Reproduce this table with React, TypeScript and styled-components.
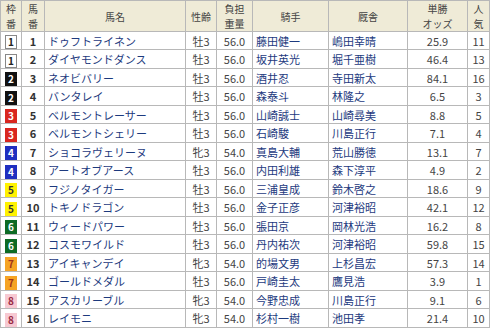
import React from "react";
import styled, { createGlobalStyle } from "styled-components";

const GlobalStyle = createGlobalStyle`
  body {
    margin: 0;
    background: #fff;
    font-family: "Noto Sans CJK JP", "Noto Sans", sans-serif;
  }
`;

const Table = styled.table`
  width: 489px;
  table-layout: fixed;
  border-collapse: collapse;
  border: 1px solid #b8b8b8;
  font-size: 11px;
  color: #444;
`;

const HeadCell = styled.th`
  height: 30px;
  padding: 0;
  background: #efebd7;
  border: 1px solid #b8b8b8;
  font-weight: normal;
  font-size: 10px;
  line-height: 15px;
  color: #444;
  text-align: center;
`;

const Row = styled.tr<{ $tall: boolean }>`
  height: ${({ $tall }) => ($tall ? 19 : 18)}px;
`;

const Cell = styled.td<{ $align?: "left" | "center"; $link?: boolean }>`
  padding: 0 ${({ $align }) => ($align === "left" ? "3px" : "0")};
  border: 1px solid #b8b8b8;
  text-align: ${({ $align }) => $align ?? "center"};
  color: ${({ $link }) => ($link ? "#1d3a7e" : "#444")};
  white-space: nowrap;
  overflow: hidden;
  line-height: 16px;
`;

const frameColors: Record<number, { bg: string; fg: string; border: string }> = {
  1: { bg: "#ffffff", fg: "#222", border: "#888" },
  2: { bg: "#111111", fg: "#fff", border: "#111" },
  3: { bg: "#d9261f", fg: "#fff", border: "#d9261f" },
  4: { bg: "#1f2fc0", fg: "#fff", border: "#1f2fc0" },
  5: { bg: "#fff200", fg: "#333", border: "#fff200" },
  6: { bg: "#0d6b24", fg: "#fff", border: "#0d6b24" },
  7: { bg: "#f6a425", fg: "#a0321c", border: "#f6a425" },
  8: { bg: "#f7c9d2", fg: "#9a2a45", border: "#f7c9d2" },
};

const Frame = styled.span<{ $n: number }>`
  display: inline-block;
  box-sizing: border-box;
  width: 12px;
  height: 14px;
  line-height: 12px;
  font-size: 10px;
  font-weight: bold;
  text-align: center;
  vertical-align: middle;
  background: ${({ $n }) => frameColors[$n].bg};
  color: ${({ $n }) => frameColors[$n].fg};
  border: 1px solid ${({ $n }) => frameColors[$n].border};
`;

const Number = styled.span`
  font-weight: bold;
  color: #333;
`;

type Horse = {
  frame: number;
  no: number;
  name: string;
  sex: string;
  weight: string;
  jockey: string;
  trainer: string;
  odds: string;
  pop: number;
};

const horses: Horse[] = [
  { frame: 1, no: 1, name: "ドゥフトライネン", sex: "牡3", weight: "56.0", jockey: "藤田健一", trainer: "嶋田幸晴", odds: "25.9", pop: 11 },
  { frame: 1, no: 2, name: "ダイヤモンドダンス", sex: "牡3", weight: "56.0", jockey: "坂井英光", trainer: "堀千亜樹", odds: "46.4", pop: 13 },
  { frame: 2, no: 3, name: "ネオビバリー", sex: "牡3", weight: "56.0", jockey: "酒井忍", trainer: "寺田新太", odds: "84.1", pop: 16 },
  { frame: 2, no: 4, name: "バンタレイ", sex: "牡3", weight: "56.0", jockey: "森泰斗", trainer: "林隆之", odds: "6.5", pop: 3 },
  { frame: 3, no: 5, name: "ベルモントレーサー", sex: "牡3", weight: "56.0", jockey: "山崎誠士", trainer: "山崎尋美", odds: "8.8", pop: 5 },
  { frame: 3, no: 6, name: "ベルモントシェリー", sex: "牡3", weight: "56.0", jockey: "石崎駿", trainer: "川島正行", odds: "7.1", pop: 4 },
  { frame: 4, no: 7, name: "ショコラヴェリーヌ", sex: "牝3", weight: "54.0", jockey: "真島大輔", trainer: "荒山勝徳", odds: "13.1", pop: 7 },
  { frame: 4, no: 8, name: "アートオブアース", sex: "牡3", weight: "56.0", jockey: "内田利雄", trainer: "森下淳平", odds: "4.9", pop: 2 },
  { frame: 5, no: 9, name: "フジノタイガー", sex: "牡3", weight: "56.0", jockey: "三浦皇成", trainer: "鈴木啓之", odds: "18.6", pop: 9 },
  { frame: 5, no: 10, name: "トキノドラゴン", sex: "牡3", weight: "56.0", jockey: "金子正彦", trainer: "河津裕昭", odds: "42.1", pop: 12 },
  { frame: 6, no: 11, name: "ウィードパワー", sex: "牡3", weight: "56.0", jockey: "張田京", trainer: "岡林光浩", odds: "16.2", pop: 8 },
  { frame: 6, no: 12, name: "コスモワイルド", sex: "牡3", weight: "56.0", jockey: "丹内祐次", trainer: "河津裕昭", odds: "59.8", pop: 15 },
  { frame: 7, no: 13, name: "アイキャンデイ", sex: "牝3", weight: "54.0", jockey: "的場文男", trainer: "上杉昌宏", odds: "57.3", pop: 14 },
  { frame: 7, no: 14, name: "ゴールドメダル", sex: "牡3", weight: "56.0", jockey: "戸崎圭太", trainer: "鷹見浩", odds: "3.9", pop: 1 },
  { frame: 8, no: 15, name: "アスカリーブル", sex: "牝3", weight: "54.0", jockey: "今野忠成", trainer: "川島正行", odds: "9.1", pop: 6 },
  { frame: 8, no: 16, name: "レイモニ", sex: "牝3", weight: "54.0", jockey: "杉村一樹", trainer: "池田孝", odds: "21.4", pop: 10 },
];

const widths = [21, 23, 141, 31, 36, 76, 79, 60, 22];

function App() {
  return (
    <>
      <GlobalStyle />
      <Table>
        <colgroup>
          {widths.map((w, i) => (
            <col key={i} style={{ width: w }} />
          ))}
        </colgroup>
        <thead>
          <tr>
            <HeadCell>枠<br />番</HeadCell>
            <HeadCell>馬<br />番</HeadCell>
            <HeadCell>馬名</HeadCell>
            <HeadCell>性齢</HeadCell>
            <HeadCell>負担<br />重量</HeadCell>
            <HeadCell>騎手</HeadCell>
            <HeadCell>厩舎</HeadCell>
            <HeadCell>単勝<br />オッズ</HeadCell>
            <HeadCell>人<br />気</HeadCell>
          </tr>
        </thead>
        <tbody>
          {horses.map((h, i) => (
            <Row key={h.no} $tall={i % 2 === 1}>
              <Cell>
                <Frame $n={h.frame}>{h.frame}</Frame>
              </Cell>
              <Cell>
                <Number>{h.no}</Number>
              </Cell>
              <Cell $align="left" $link>{h.name}</Cell>
              <Cell>{h.sex}</Cell>
              <Cell>{h.weight}</Cell>
              <Cell $align="left" $link>{h.jockey}</Cell>
              <Cell $align="left" $link>{h.trainer}</Cell>
              <Cell>{h.odds}</Cell>
              <Cell>{h.pop}</Cell>
            </Row>
          ))}
        </tbody>
      </Table>
    </>
  );
}

export default App;
